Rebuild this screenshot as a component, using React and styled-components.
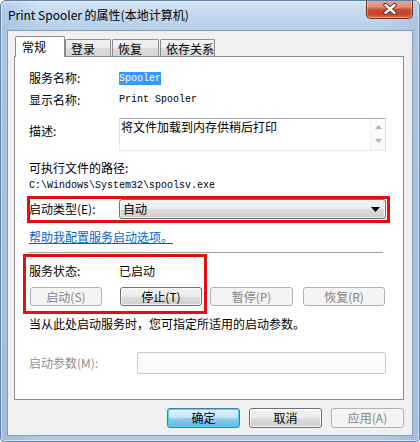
import React from "react";
import styled, { createGlobalStyle } from "styled-components";

const GlobalStyle = createGlobalStyle`
  html, body { margin: 0; padding: 0; background: #ffffff; }
  body {
    width: 420px; height: 442px; overflow: hidden;
    font-family: "Noto Sans CJK SC", "Liberation Sans", sans-serif;
    font-size: 12px; color: #000;
  }
  * { box-sizing: border-box; }
`;

const Window = styled.div`
  width: 420px;
  height: 442px;
  display: flex;
  flex-direction: column;
  border: 1px solid #5f7fa6;
  border-radius: 6px 6px 4px 4px;
  background:
    linear-gradient(90deg, rgba(140,170,205,0.35) 0px, rgba(255,255,255,0) 40px, rgba(255,255,255,0) 380px, rgba(140,170,205,0.35) 420px),
    linear-gradient(180deg, #d6e5f5 0px, #c2d7ee 14px, #b7cfea 29px, #aec8e6 100%);
  box-shadow: inset 0 0 0 1px rgba(255,255,255,0.55);
  overflow: hidden;
`;

const TitleBar = styled.div`
  height: 29px;
  flex: none;
  display: flex;
  justify-content: space-between;
  align-items: flex-start;
  padding-left: 7px;
`;

const Title = styled.div`
  margin-top: 6px;
  line-height: 16px;
  font-size: 12px;
  color: #000;
  white-space: nowrap;
`;

const CloseButton = styled.div`
  width: 47px;
  height: 19px;
  margin-top: -1px;
  margin-right: 6px;
  border: 1px solid #6e2b20;
  border-top: none;
  border-radius: 0 0 5px 5px;
  background: linear-gradient(180deg, #e9a995 0%, #dc8a74 40%, #c6472e 55%, #c9452c 80%, #e0734f 100%);
  box-shadow: inset 0 0 0 1px rgba(255,255,255,0.35);
  display: flex;
  align-items: center;
  justify-content: center;
`;

const Client = styled.div`
  flex: 1;
  margin: 0 6px 5px 6px;
  border: 1px solid #8a9db7;
  background: #f0f0f0;
  display: flex;
  flex-direction: column;
  padding: 5px 8px 0 6px;
`;

const TabRow = styled.div`
  height: 20px;
  display: flex;
  align-items: flex-end;
  padding-left: 1px;
  position: relative;
  z-index: 1;
`;

const Tab = styled.div`
  width: ${p => p.$w}px;
  margin-left: ${p => p.$ml || 0}px;
  height: ${p => (p.$active ? 21 : 17)}px;
  margin-bottom: ${p => (p.$active ? -1 : 0)}px;
  padding-left: ${p => (p.$active ? 6 : 5)}px;
  border: 1px solid #898c95;
  border-bottom: none;
  border-radius: 2px 2px 0 0;
  background: ${p => (p.$active ? "#ffffff" : "linear-gradient(180deg, #f3f3f3 0%, #ebebeb 50%, #dddddd 51%, #d5d5d5 100%)")};
  display: flex;
  align-items: center;
  font-size: 12px;
  line-height: 16px;
  padding-top: ${p => (p.$active ? 0 : 1)}px;
  white-space: nowrap;
`;

const Panel = styled.div`
  width: 390px;
  height: 344px;
  flex: none;
  background: #ffffff;
  border: 1px solid #898c95;
  display: flex;
  flex-direction: column;
  padding: 13px 17px 0 14px;
`;

const Row = styled.div`
  display: flex;
  align-items: ${p => p.$align || "center"};
  margin-top: ${p => p.$mt || 0}px;
  position: relative;
`;

const Label = styled.div`
  width: ${p => p.$w || 90}px;
  flex: none;
  line-height: 16px;
  height: 16px;
  padding-top: ${p => p.$pt || 0}px;
  box-sizing: content-box;
  color: ${p => (p.$disabled ? "#8f8f8f" : "#000")};
  white-space: nowrap;
`;

const Mono = styled.span`
  font-family: "Liberation Mono", "DejaVu Sans Mono", monospace;
  font-size: 10px;
  line-height: ${p => p.$lh || 16}px;
  color: ${p => (p.$disabled ? "#8f8f8f" : "inherit")};
`;

const Selected = styled.span`
  display: inline-block;
  font-family: "Liberation Mono", "DejaVu Sans Mono", monospace;
  font-size: 10px;
  line-height: 13px;
  background: #3399ff;
  color: #ffffff;
`;

const Value = styled.div`
  line-height: 16px;
  height: 16px;
  display: flex;
  align-items: center;
`;

const TextArea = styled.div`
  flex: 1;
  height: 33px;
  border: 1px solid #abadb3;
  border-right-color: #dbdfe6;
  border-bottom-color: #e3e9ef;
  border-left-color: #e2e3ea;
  display: flex;
  background: #fff;
`;

const TextAreaText = styled.div`
  flex: 1;
  padding-left: 1px;
  line-height: 16px;
  white-space: nowrap;
`;

const ScrollStrip = styled.div`
  width: 15px;
  flex: none;
  background: #fbfbfb;
  border-left: 1px solid #f0f0f0;
  display: flex;
  flex-direction: column;
  justify-content: space-between;
  align-items: center;
  padding: 6px 0 7px;
`;

const Text = styled.div`
  margin-top: ${p => p.$mt || 0}px;
  line-height: ${p => p.$lh || 16}px;
  height: ${p => p.$lh || 16}px;
  color: ${p => (p.$disabled ? "#8f8f8f" : "#000")};
  white-space: nowrap;
`;

const Combo = styled.div`
  flex: 1;
  height: 20px;
  border: 1px solid #707070;
  border-radius: 3px;
  background: linear-gradient(180deg, #f2f2f2 0%, #ebebeb 50%, #dddddd 50%, #cfcfcf 100%);
  box-shadow: inset 0 0 0 1px rgba(255,255,255,0.7);
  display: flex;
  align-items: center;
  justify-content: space-between;
  padding: 0 5px 0 3px;
  line-height: 16px;
`;

const Link = styled.a`
  display: block;
  margin-top: 10px;
  line-height: 16px;
  height: 16px;
  color: #0066cc;
  text-decoration: underline;
  white-space: nowrap;
  align-self: flex-start;
`;

const Separator = styled.div`
  margin-top: 7px;
  margin-right: 3px;
  height: 1px;
  background: #a0a0a0;
`;

const Group = styled.div`
  margin-top: ${p => p.$mt || 0}px;
  position: relative;
  display: flex;
  flex-direction: column;
`;

const RedFrame = styled.div`
  position: absolute;
  top: ${p => p.$top}px;
  left: ${p => p.$left}px;
  width: ${p => p.$w}px;
  height: ${p => p.$h}px;
  border: 3px solid #e3100f;
  pointer-events: none;
`;

const ButtonRow = styled.div`
  display: flex;
  margin-top: ${p => p.$mt || 0}px;
  justify-content: ${p => p.$justify || "flex-start"};
  gap: ${p => p.$gap || 0}px;
`;

const Button = styled.div`
  width: ${p => p.$w}px;
  height: ${p => p.$h || 19}px;
  margin-left: ${p => p.$ml || 0}px;
  flex: none;
  border: 1px solid ${p => (p.$disabled ? "#adb2b5" : p.$default ? "#3c7fb1" : "#707070")};
  border-radius: 3px;
  background: ${p =>
    p.$disabled
      ? "#f4f4f4"
      : p.$default
      ? "linear-gradient(180deg, #e5f4fc 0%, #c4e5f6 50%, #98d1ef 50%, #68b3db 100%)"
      : "linear-gradient(180deg, #f2f2f2 0%, #ebebeb 50%, #dddddd 50%, #cfcfcf 100%)"};
  box-shadow: ${p => (p.$disabled ? "none" : p.$default ? "inset 0 0 0 1px #48d7fb" : "inset 0 0 0 1px rgba(255,255,255,0.75)")};
  color: ${p => (p.$disabled ? "#838383" : "#000")};
  display: flex;
  align-items: center;
  justify-content: center;
  line-height: 16px;
  white-space: nowrap;
`;

const Input = styled.div`
  flex: 1;
  height: 22px;
  border: 1px solid #c9c9c9;
  border-radius: 2px;
  background: #fbfbfb;
`;

const Arrow = ({ dir = "down", color = "#000", w = 9, h = 5 }) => (
  <svg width={w} height={h} viewBox={`0 0 ${w} ${h}`}>
    {dir === "down" ? (
      <polygon points={`0,0 ${w},0 ${w / 2},${h}`} fill={color} />
    ) : (
      <polygon points={`0,${h} ${w},${h} ${w / 2},0`} fill={color} />
    )}
  </svg>
);

const CloseIcon = () => (
  <svg width="14" height="12" viewBox="0 0 14 12">
    <path d="M2.5,2 L11.5,10 M11.5,2 L2.5,10" stroke="#5a1d12" strokeWidth="4.2" strokeLinecap="round" fill="none" />
    <path d="M2.5,2 L11.5,10 M11.5,2 L2.5,10" stroke="#ffffff" strokeWidth="2.4" strokeLinecap="round" fill="none" />
  </svg>
);

export default function App() {
  return (
    <>
      <GlobalStyle />
      <Window>
        <TitleBar>
          <Title>Print Spooler 的属性(本地计算机)</Title>
          <CloseButton>
            <CloseIcon />
          </CloseButton>
        </TitleBar>
        <Client>
          <TabRow>
            <Tab $active $w={50}>常规</Tab>
            <Tab $w={46}>登录</Tab>
            <Tab $w={47} $ml={1}>恢复</Tab>
            <Tab $w={55} $ml={1}>依存关系</Tab>
          </TabRow>
          <Panel>
            <Row>
              <Label>服务名称:</Label>
              <Value>
                <Selected>Spooler</Selected>
              </Value>
            </Row>
            <Row $mt={6}>
              <Label>显示名称:</Label>
              <Value>
                <Mono>Print Spooler</Mono>
              </Value>
            </Row>
            <Row $mt={10} $align="flex-start">
              <Label $pt={5}>描述:</Label>
              <TextArea>
                <TextAreaText>将文件加载到内存供稍后打印</TextAreaText>
                <ScrollStrip>
                  <Arrow dir="up" color="#b4b4b4" w={7} h={4} />
                  <Arrow dir="down" color="#b4b4b4" w={7} h={4} />
                </ScrollStrip>
              </TextArea>
            </Row>
            <Text $mt={9}>可执行文件的路径:</Text>
            <Text $lh={14}>
              <Mono $lh={14}>C:\Windows\System32\spoolsv.exe</Mono>
            </Text>
            <Row $mt={9}>
              <Label>启动类型(E):</Label>
              <Combo>
                <span>自动</span>
                <Arrow />
              </Combo>
              <RedFrame $top={-3} $left={-2} $w={363} $h={27} />
            </Row>
            <Link>帮助我配置服务启动选项。</Link>
            <Separator />
            <Group $mt={10}>
              <Row>
                <Label>服务状态:</Label>
                <Value>已启动</Value>
              </Row>
              <ButtonRow $mt={8}>
                <Button $w={72} $ml={1} $disabled>启动(S)</Button>
                <Button $w={82} $ml={18}>停止(T)</Button>
                <Button $w={83} $ml={8} $disabled>暂停(P)</Button>
                <Button $w={82} $ml={10} $disabled>恢复(R)</Button>
              </ButtonRow>
              <RedFrame $top={-9} $left={-6} $w={184} $h={60} />
            </Group>
            <Text $mt={10}>当从此处启动服务时，您可指定所适用的启动参数。</Text>
            <Row $mt={20}>
              <Label $w={108} $disabled>启动参数(M):</Label>
              <Input />
            </Row>
          </Panel>
          <ButtonRow $mt={8} $justify="flex-end" $gap={9}>
            <Button $w={73} $h={20} $default>确定</Button>
            <Button $w={73} $h={20}>取消</Button>
            <Button $w={73} $h={20} $disabled>应用(A)</Button>
          </ButtonRow>
        </Client>
      </Window>
    </>
  );
}
